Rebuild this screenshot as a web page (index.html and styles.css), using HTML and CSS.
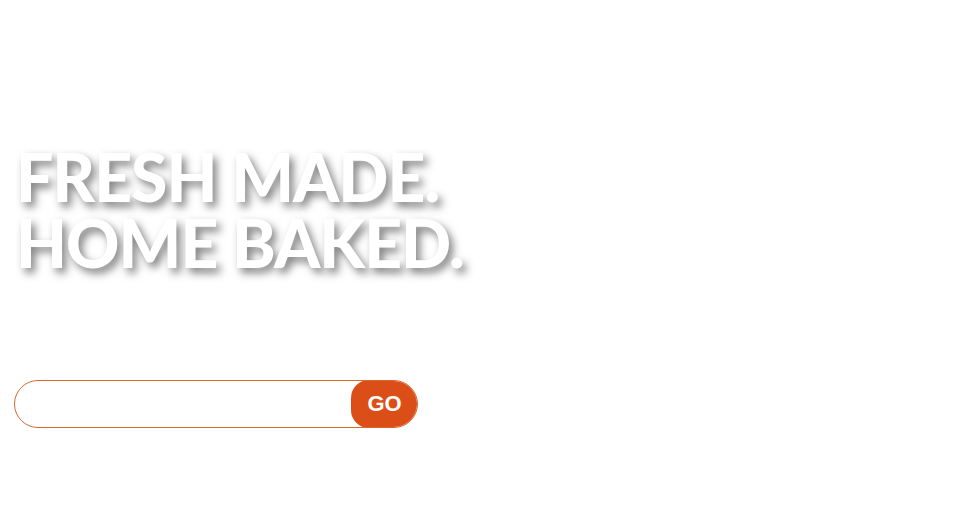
FILE: index.html
```html
<!DOCTYPE html>
<html>
<head>
<meta charset="utf-8">
<link rel="stylesheet" href="styles.css">
</head>
<body>
<main class="hero">
  <h1 class="headline">FRESH MADE.<br>HOME BAKED.</h1>
  <form class="search" onsubmit="return false">
    <input class="search-input" type="text" aria-label="Search">
    <button class="search-btn" type="submit">GO</button>
  </form>
</main>
</body>
</html>
```

FILE: styles.css
```css
html, body {
  margin: 0;
  padding: 0;
  background: #ffffff;
}
.hero {
  width: 978px;
  height: 510px;
  box-sizing: border-box;
  padding: 144px 0 0 14px;
  display: flex;
  flex-direction: column;
  align-items: flex-start;
}
.headline {
  margin: 0;
  font-family: "Lato", "DejaVu Sans", sans-serif;
  font-weight: 900;
  font-size: 66px;
  line-height: 66px;
  letter-spacing: -1px;
  color: #ffffff;
  text-shadow: 4px 5px 8px rgba(0, 0, 0, 0.5);
  padding-left: 2px;
}
.search {
  margin-top: 104px;
  display: flex;
  width: 404px;
  height: 48px;
  box-sizing: border-box;
  border: 1px solid #d8692f;
  border-radius: 24px;
  overflow: hidden;
  background: #fff;
}
.search-input {
  flex: 1;
  border: 0;
  outline: none;
  background: transparent;
  padding: 0 18px;
  font-family: "Liberation Sans", sans-serif;
  font-size: 16px;
}
.search-btn {
  width: 67px;
  margin: -1px -1px -1px 0;
  border: 0;
  border-radius: 18px;
  background: #dc4e18;
  color: #ffffff;
  font-family: "Liberation Sans", sans-serif;
  font-weight: 700;
  font-size: 22px;
  cursor: pointer;
  padding: 0;
}
```
